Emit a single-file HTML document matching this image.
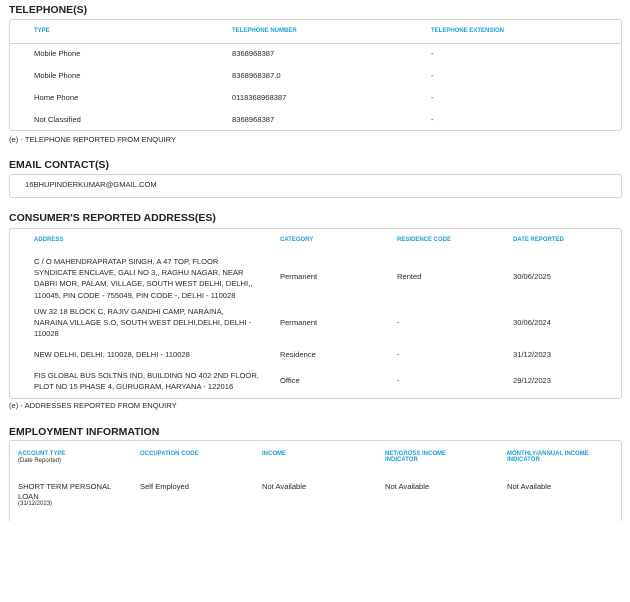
<!DOCTYPE html>
<html><head><meta charset="utf-8"><style>
body{margin:0;width:630px;height:602px;background:#fff;position:relative;font-family:"Liberation Sans",sans-serif;color:#2a2a2a;overflow:hidden}
div{position:absolute;white-space:nowrap}
.t{font-size:10.5px;font-weight:bold;color:#222;left:9px}
.h{font-size:6px;font-weight:bold;color:#1e9fd2}
.v{font-size:7.6px;color:#2a2a2a}
.box{border:1px solid #d4d4d4;border-radius:3px;left:9px;width:611px}
.n{font-size:7.6px;line-height:11.2px}
</style></head><body>
<div class="t" style="top:4px">TELEPHONE(S)</div>
<div class="box" style="top:19px;height:110px"></div>
<div style="left:10px;top:43px;width:611px;border-top:1px solid #d4d4d4"></div>
<div class="h" style="left:34px;top:28px">TYPE</div>
<div class="h" style="left:232px;top:28px">TELEPHONE NUMBER</div>
<div class="h" style="left:431px;top:28px">TELEPHONE EXTENSION</div>
<div class="v" style="left:34px;top:49px">Mobile Phone</div><div class="v" style="left:232px;top:49px">8368968387</div><div class="v" style="left:431px;top:49px">-</div>
<div class="v" style="left:34px;top:71px">Mobile Phone</div><div class="v" style="left:232px;top:71px">8368968387.0</div><div class="v" style="left:431px;top:71px">-</div>
<div class="v" style="left:34px;top:93px">Home Phone</div><div class="v" style="left:232px;top:93px">0118368968387</div><div class="v" style="left:431px;top:93px">-</div>
<div class="v" style="left:34px;top:115px">Not Classified</div><div class="v" style="left:232px;top:115px">8368968387</div><div class="v" style="left:431px;top:115px">-</div>
<div class="v" style="left:9px;top:135px">(e) - TELEPHONE REPORTED FROM ENQUIRY</div>

<div class="t" style="top:159px">EMAIL CONTACT(S)</div>
<div class="box" style="top:174px;height:22px"></div>
<div class="v" style="left:25px;top:180px">16BHUPINDERKUMAR@GMAIL.COM</div>

<div class="t" style="top:212px">CONSUMER'S REPORTED ADDRESS(ES)</div>
<div class="box" style="top:228px;height:169px"></div>
<div class="h" style="left:34px;top:237px">ADDRESS</div>
<div class="h" style="left:280px;top:237px">CATEGORY</div>
<div class="h" style="left:397px;top:237px">RESIDENCE CODE</div>
<div class="h" style="left:513px;top:237px">DATE REPORTED</div>
<div class="n" style="left:34px;top:256px">C / O MAHENDRAPRATAP SINGH, A 47 TOP, FLOOR<br>SYNDICATE ENCLAVE, GALI NO 3,, RAGHU NAGAR, NEAR<br>DABRI MOR, PALAM, VILLAGE, SOUTH WEST DELHI, DELHI,,<br>110045, PIN CODE - 755049, PIN CODE -, DELHI - 110028</div>
<div class="v" style="left:280px;top:272px">Permanent</div><div class="v" style="left:397px;top:272px">Rented</div><div class="v" style="left:513px;top:272px">30/06/2025</div>
<div class="n" style="left:34px;top:306px">UW 32 18 BLOCK C, RAJIV GANDHI CAMP, NARAINA,<br>NARAINA VILLAGE S.O, SOUTH WEST DELHI,DELHI, DELHI -<br>110028</div>
<div class="v" style="left:280px;top:318px">Permanent</div><div class="v" style="left:397px;top:318px">-</div><div class="v" style="left:513px;top:318px">30/06/2024</div>
<div class="v" style="left:34px;top:350px">NEW DELHI, DELHI, 110028, DELHI - 110028</div>
<div class="v" style="left:280px;top:350px">Residence</div><div class="v" style="left:397px;top:350px">-</div><div class="v" style="left:513px;top:350px">31/12/2023</div>
<div class="n" style="left:34px;top:370px">FIS GLOBAL BUS SOLTNS IND, BUILDING NO 402 2ND FLOOR,<br>PLOT NO 15 PHASE 4, GURUGRAM, HARYANA - 122016</div>
<div class="v" style="left:280px;top:376px">Office</div><div class="v" style="left:397px;top:376px">-</div><div class="v" style="left:513px;top:376px">29/12/2023</div>
<div class="v" style="left:9px;top:401px">(e) - ADDRESSES REPORTED FROM ENQUIRY</div>

<div class="t" style="top:426px">EMPLOYMENT INFORMATION</div>
<div class="box" style="top:440px;height:80px;border-bottom:none;border-radius:3px 3px 0 0"></div>
<div class="h" style="left:18px;top:451px">ACCOUNT TYPE</div>
<div class="v" style="left:18px;top:458px;font-size:6px">(Date Reported)</div>
<div class="h" style="left:140px;top:451px">OCCUPATION CODE</div>
<div class="h" style="left:262px;top:451px">INCOME</div>
<div class="h" style="left:385px;top:451px;line-height:6px">NET/GROSS INCOME<br>INDICATOR</div>
<div class="h" style="left:507px;top:451px;line-height:6px">MONTHLY/ANNUAL INCOME<br>INDICATOR</div>
<div class="v" style="left:18px;top:482px;line-height:9.5px">SHORT TERM PERSONAL<br>LOAN</div>
<div class="v" style="left:18px;top:501px;font-size:6px">(31/12/2023)</div>
<div class="v" style="left:140px;top:482px">Self Employed</div>
<div class="v" style="left:262px;top:482px">Not Available</div>
<div class="v" style="left:385px;top:482px">Not Available</div>
<div class="v" style="left:507px;top:482px">Not Available</div>
</body></html>
